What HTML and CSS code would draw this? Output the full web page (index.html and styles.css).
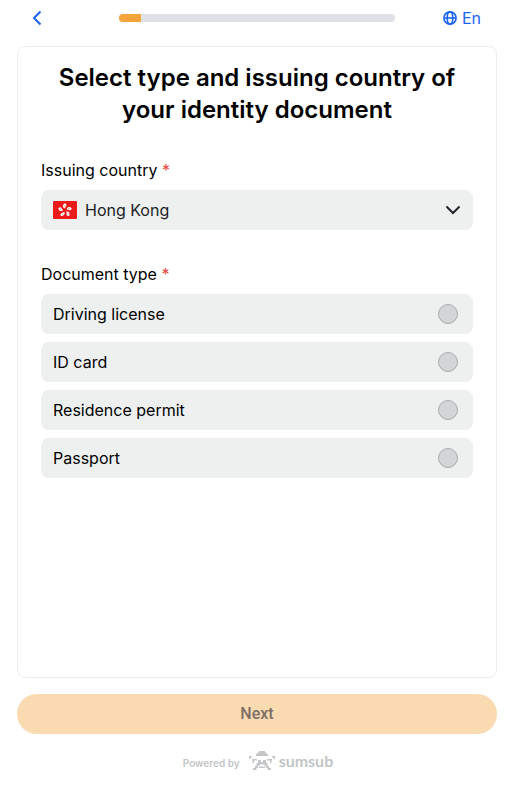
FILE: index.html
```
<!DOCTYPE html>
<html lang="en">
<head>
  <meta charset="UTF-8">
  <meta name="viewport" content="width=device-width, initial-scale=1">
  <title>Identity document</title>
  <link rel="stylesheet" href="styles.css">
</head>
<body>

  <header class="topbar">
    <button type="button" class="back" aria-label="Back">
      <svg width="10" height="16" viewBox="0 0 10 16"><path d="M8.500 1.500 2 8l6.500 6.500"/></svg>
    </button>
    <div class="progress" role="progressbar" aria-label="Progress" aria-valuenow="8" aria-valuemin="0" aria-valuemax="100">
      <div class="progress-fill" style="width: 8%"></div>
    </div>
    <button type="button" class="lang">
      <svg width="16" height="16" viewBox="0 0 16 16">
        <circle cx="8" cy="8" r="6.100"/>
        <ellipse cx="8" cy="8" rx="2.800" ry="6.100"/>
        <path d="M2 8h12"/>
      </svg>
      En
    </button>
  </header>

  <form class="form">
    <main class="card">
      <h1>Select type and issuing country of your identity document</h1>

      <div class="field">
        <label class="label" for="country">Issuing country <span class="required">*</span></label>
        <div class="select-box">
          <svg class="flag" width="24" height="18" viewBox="0 0 24 18">
            <rect width="24" height="18" rx="1" fill="#ec1b1b"/>
            <g fill="#fff">
              <path id="petal" d="M11.800 7.500C9.400 6.700 9.300 3.600 12 2.300c1.600 1 1.900 2.200.9 3.100-.6.600-1 1.100-1.100 2.100zM11.200 6c.1-.9.500-1.200.9-1.800-1 .3-1.400 1-.9 1.800z" fill-rule="evenodd"/>
              <use href="#petal" transform="rotate(72 12 9.300)"/>
              <use href="#petal" transform="rotate(144 12 9.300)"/>
              <use href="#petal" transform="rotate(216 12 9.300)"/>
              <use href="#petal" transform="rotate(288 12 9.300)"/>
            </g>
          </svg>
          <select id="country" class="select">
            <option>Hong Kong</option>
          </select>
          <svg class="chevron" width="16" height="16" viewBox="0 0 16 16"><path d="M1.500 4.500 8 11l6.500-6.500"/></svg>
        </div>
      </div>

      <fieldset class="field">
        <legend class="label">Document type <span class="required">*</span></legend>
        <div class="options">
          <label class="option">Driving license <input type="radio" name="doc" value="driving"></label>
          <label class="option">ID card <input type="radio" name="doc" value="id"></label>
          <label class="option">Residence permit <input type="radio" name="doc" value="residence"></label>
          <label class="option">Passport <input type="radio" name="doc" value="passport"></label>
        </div>
      </fieldset>
    </main>

    <button type="submit" class="next" disabled>Next</button>
  </form>

  <footer class="footer">
    <span class="powered">Powered by</span>
    <svg class="mark" width="26" height="20" viewBox="0 0 26 20">
      <path d="M10 0h6v1.500h1.500V3H19v2H7V3h1.500V1.500H10z"/>
      <path d="M0 5h3v1.500H1.500V8H0zM26 5h-3v1.500h1.500V8H26z"/>
      <path d="M3 8h5v1.500H5V12H3.500V9.500H3zM23 8h-5v1.500h3V12h1.500V9.500h.5z"/>
      <path d="M9 9h3v2h2V9h3v3h1.500v3H20v2h2v2h-3.500v-2H17v-2h-1.500v-1.500h-5V15H9v2H7.500v2H4v-2h2v-2h1.500v-3H9z"/>
      <path d="M10 15.500h6V17h-6z"/>
    </svg>
    <span class="wordmark">sumsub</span>
  </footer>

</body>
</html>
```
FILE: styles.css
```
* {
  box-sizing: border-box;
}

body {
  display: flex;
  flex-direction: column;
  min-height: 100vh;
  margin: 0;
  padding: 0 35px 0 17px;
  font-family: Inter, "Liberation Sans", sans-serif;
  font-size: 16px;
  line-height: 24px;
  color: #000;
  background: #fff;
}

button {
  padding: 0;
  border: none;
  background: none;
  font: inherit;
  cursor: pointer;
}

.topbar {
  display: flex;
  align-items: center;
  height: 36px;
  padding: 0 16px 0 15px;
  margin-bottom: 10px;
}

.back,
.lang {
  display: flex;
  align-items: center;
  gap: 4px;
  width: 40px;
  color: #1c64f2;
}

.lang {
  width: 39px;
}

.back svg,
.lang svg {
  flex: none;
  fill: none;
  stroke: currentColor;
  stroke-width: 2;
}

.lang svg {
  stroke-width: 1.6;
}

.progress {
  flex: 1;
  height: 8px;
  margin: 0 47px;
  border-radius: 4px;
  background: #dee2e6;
  overflow: hidden;
}

.progress-fill {
  height: 100%;
  background: #f5a43c;
}

.form {
  display: flex;
  flex: 1;
  flex-direction: column;
}

.card {
  flex: 1;
  padding: 15px 23px;
  border: 1px solid #ededee;
  border-radius: 8px;
}

h1 {
  margin: 0 0 32px;
  font-size: 24px;
  font-weight: 600;
  line-height: 32px;
  text-align: center;
}

.field {
  margin: 0 0 32px;
  padding: 0;
  border: none;
}

.label {
  display: block;
  padding: 0;
  margin-bottom: 8px;
}

.required {
  color: #f04438;
}

.select-box,
.option {
  display: flex;
  align-items: center;
  height: 40px;
  padding: 0 12px;
  border-radius: 8px;
  background: #eef0f0;
}

.select-box {
  position: relative;
}

.flag {
  flex: none;
}

/* the select covers the whole box so a click anywhere opens it */
.select {
  position: absolute;
  inset: 0;
  width: 100%;
  padding: 0 40px 0 44px;
  border: none;
  border-radius: 8px;
  background: none;
  font: inherit;
  color: #1b1d1f;
  appearance: none;
}

.chevron {
  margin-left: auto;
  fill: none;
  stroke: #22252d;
  stroke-width: 2;
}

.options {
  display: grid;
  gap: 8px;
}

.option {
  justify-content: space-between;
  padding-right: 15px;
}

.option input {
  width: 20px;
  height: 20px;
  margin: 0;
  border: 1px solid #a9abae;
  border-radius: 50%;
  background: #d4d5d7;
  appearance: none;
}

.option input:checked {
  border: 6px solid #f5a43c;
}

.next {
  height: 40px;
  margin-top: 16px;
  border-radius: 20px;
  background: #fadab1;
  font-family: Roboto, sans-serif;
  font-weight: 500;
  color: #7d6d66;
}

.footer {
  display: flex;
  align-items: center;
  justify-content: center;
  height: 60px;
  padding: 0 0 6px 2px;
  color: #c3c5c7;
}

.powered {
  padding-top: 4px;
  font-size: 10px;
  font-weight: 600;
}

.mark {
  margin: 0 4px 0 9px;
  fill: currentColor;
}

.wordmark {
  font-family: Lato, sans-serif;
  font-size: 16px;
  font-weight: 700;
}
```
